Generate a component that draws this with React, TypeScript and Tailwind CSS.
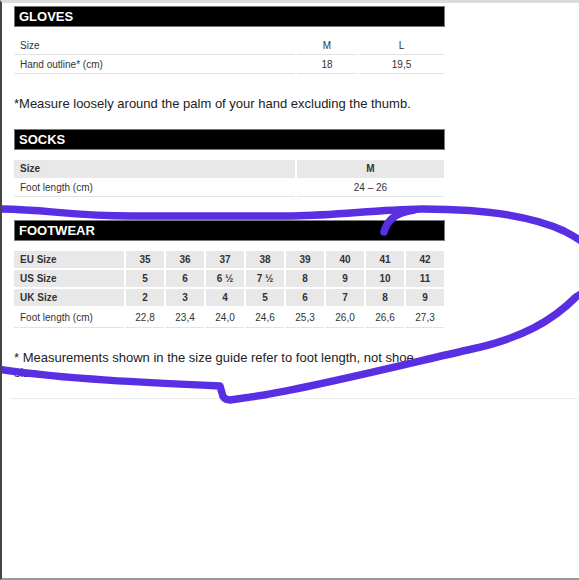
const font = { fontFamily: '"Liberation Sans", Arial, sans-serif' };

const eu = ["35", "36", "37", "38", "39", "40", "41", "42"];
const us = ["5", "6", "6 ½", "7 ½", "8", "9", "10", "11"];
const uk = ["2", "3", "4", "5", "6", "7", "8", "9"];
const foot = ["22,8", "23,4", "24,0", "24,6", "25,3", "26,0", "26,6", "27,3"];

function Bar({ title }: { title: string }) {
  return (
    <div className="h-[21px] w-[431px] border border-[#777] bg-black pl-[4px] text-[13px] leading-[19px] font-bold text-white">
      {title}
    </div>
  );
}

function Scribble() {
  return (
    <svg className="pointer-events-none absolute inset-0" width="579" height="580" viewBox="0 0 579 580">
      <g fill="none" stroke="#5a2fe3" strokeWidth="7.5" strokeLinecap="round" strokeLinejoin="round">
        <path d="M -5 206 C 40 206, 70 213, 130 213 L 290 213 C 340 212, 370 207, 420 206 C 480 206, 530 213, 562 228 C 605 250, 612 272, 574 294 C 550 318, 520 335, 470 346 C 420 357, 330 380, 262 392 L 228 397 Q 221 397, 220 390 L 218 383 C 150 380, 60 376, -5 366" />
        <path d="M 382 229 C 385 218, 392 210, 412 207" />
      </g>
    </svg>
  );
}

export default function App() {
  return (
    <div
      style={font}
      className="relative h-[580px] w-[579px] overflow-hidden border-t-[3px] border-b-2 border-l-2 border-t-[#dcdcdc] border-b-[#999] border-l-[#444] bg-white text-[#333]"
    >
      <div className="pl-3 pt-[3px]">
        <Bar title="GLOVES" />

        <div className="mt-[9px] grid w-[430px] grid-cols-[281px_60px_85px] gap-x-[2px] text-[10px]">
          {["Size", "M", "L", "Hand outline* (cm)", "18", "19,5"].map((t, i) => (
            <div
              key={i}
              className={`h-[19px] border-b border-[#e3e3e3] leading-[19px] ${i % 3 === 0 ? "pl-[6px]" : "text-center"}`}
            >
              {t}
            </div>
          ))}
        </div>

        <p className="mt-[21px] text-[13px] leading-[18px] text-[#222]">
          *Measure loosely around the palm of your hand excluding the thumb.
        </p>

        <div className="mt-[16px]">
          <Bar title="SOCKS" />
        </div>

        <div className="mt-[10px] grid w-[430px] grid-cols-[281px_147px] gap-x-[2px] text-[10px]">
          <div className="h-[18px] bg-[#e8e8e8] pl-[6px] leading-[18px] font-bold">Size</div>
          <div className="h-[18px] bg-[#e8e8e8] text-center leading-[18px] font-bold">M</div>
          <div className="h-[19px] border-b border-[#e3e3e3] pl-[6px] leading-[19px]">Foot length (cm)</div>
          <div className="h-[19px] border-b border-[#e3e3e3] text-center leading-[19px]">24 – 26</div>
        </div>

        <div className="mt-[23px]">
          <Bar title="FOOTWEAR" />
        </div>

        <div className="mt-[10px] grid w-[430px] grid-cols-[110px_repeat(8,38px)] gap-[2px] text-[10px]">
          {[
            { label: "EU Size", vals: eu },
            { label: "US Size", vals: us },
            { label: "UK Size", vals: uk },
          ].map((r) => (
            <div key={r.label} className="contents font-bold">
              <div className="h-[17px] bg-[#e8e8e8] pl-[6px] leading-[17px]">{r.label}</div>
              {r.vals.map((v, i) => (
                <div key={i} className="h-[17px] bg-[#e8e8e8] text-center leading-[17px]">
                  {v}
                </div>
              ))}
            </div>
          ))}
          <div className="h-[20px] border-b border-[#e3e3e3] pl-[6px] leading-[19px]">Foot length (cm)</div>
          {foot.map((v, i) => (
            <div key={i} className="h-[20px] border-b border-[#e3e3e3] text-center leading-[19px]">
              {v}
            </div>
          ))}
        </div>

        <p className="mt-[22px] w-[420px] text-[13px] leading-[15px] text-[#222]">
          * Measurements shown in the size guide refer to foot length, not shoe size.
        </p>
      </div>

      <div className="mt-[18px] ml-[8px] border-t border-[#ececec]" />

      <Scribble />
    </div>
  );
}
